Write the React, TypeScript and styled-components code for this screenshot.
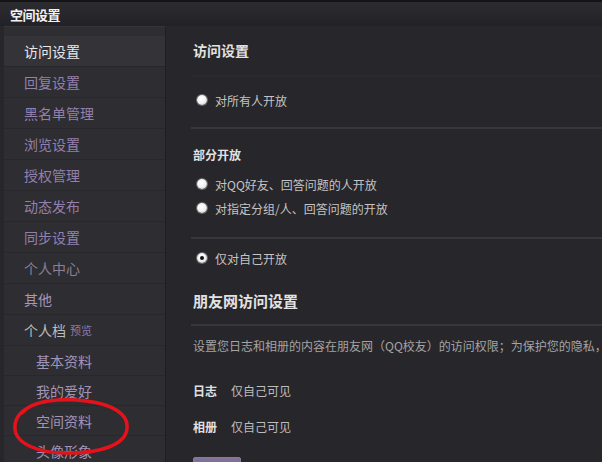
import React from "react";
import styled, { createGlobalStyle } from "styled-components";

const Global = createGlobalStyle`
  html, body { margin: 0; padding: 0; background: #27262b; }
  body { font-family: "Noto Sans CJK SC", "Noto Sans", sans-serif; }
  * { box-sizing: border-box; }
`;

const Window = styled.div`
  position: relative;
  width: 602px;
  height: 462px;
  overflow: hidden;
  display: flex;
  flex-direction: column;
  background: #27262b;
`;

const TitleBar = styled.div`
  height: 26px;
  flex: none;
  display: flex;
  align-items: center;
  padding-left: 10px;
  border-top: 2px solid #141317;
  background: linear-gradient(#2d2c31, #222126);
  color: #f2f2f2;
  font-size: 13px;
  font-weight: 700;
  letter-spacing: -0.5px;
`;

const Body = styled.div`
  flex: 1;
  display: flex;
  min-height: 0;
`;

const Sidebar = styled.nav`
  width: 162px;
  margin-left: 4px;
  flex: none;
  padding-top: 9px;
  background: #2e2d32;
  border-right: 1px solid #1f1e23;
  border-top: 1px solid #36353a;
  & > * { flex-shrink: 0; }
`;

const NavItem = styled.div<{ $active?: boolean; $sub?: boolean; $tone?: string }>`
  height: ${(p) => (p.$sub ? 30 : 31)}px;
  display: flex;
  align-items: center;
  gap: 4px;
  padding-left: ${(p) => (p.$sub ? 32 : 20)}px;
  font-size: 14px;
  color: ${(p) => (p.$active ? "#e8e8e8" : p.$tone || "#9480ac")};
  background: ${(p) => (p.$active ? "#343338" : "transparent")};
  border-bottom: 1px solid ${(p) => (p.$active ? "#27262b" : "rgba(0,0,0,0.12)")};
`;

const Preview = styled.span`
  font-size: 11px;
  color: #8f7aa8;
`;

const Main = styled.main`
  flex: 1;
  min-width: 0;
  padding: 14px 0 0 25px;
  display: flex;
  flex-direction: column;
  color: #c8c8c8;
  & > * { flex-shrink: 0; }
`;

const Heading = styled.div<{ $size?: number; $mt?: number }>`
  padding-left: 2px;
  margin-top: ${(p) => p.$mt || 0}px;
  font-size: ${(p) => p.$size || 14}px;
  font-weight: 700;
  color: #e2e2e2;
  line-height: 20px;
`;

const Rule = styled.div<{ $faint?: boolean; $mt: number; $mb: number }>`
  height: 2px;
  margin: ${(p) => p.$mt}px 0 ${(p) => p.$mb}px;
  background: ${(p) => (p.$faint ? "#2a292e" : "#38373c")};
`;

const RadioRow = styled.label<{ $mt?: number }>`
  display: flex;
  align-items: center;
  height: 24px;
  margin-top: ${(p) => p.$mt || 0}px;
  padding-left: 6px;
  gap: 8px;
  font-size: 12px;
  color: #c4c4c4;
`;

const Radio = styled.span<{ $checked?: boolean }>`
  width: 10px;
  height: 10px;
  border-radius: 50%;
  background: radial-gradient(circle at 40% 35%, #ffffff 0%, #f2f2f2 50%, #b8b8b8 100%);
  box-shadow: 0 0 0 1px #6a6a6e;
  display: flex;
  align-items: center;
  justify-content: center;
  &::after {
    content: "";
    width: 4px;
    height: 4px;
    border-radius: 50%;
    background: ${(p) => (p.$checked ? "#111" : "transparent")};
  }
`;

const Desc = styled.div`
  padding-left: 2px;
  font-size: 12px;
  color: #a4a4a4;
  white-space: nowrap;
  overflow: hidden;
  line-height: 20px;
`;

const InfoRow = styled.div<{ $mt: number }>`
  display: flex;
  align-items: center;
  margin-top: ${(p) => p.$mt}px;
  padding-left: 2px;
  font-size: 12px;
  line-height: 20px;
`;

const InfoLabel = styled.span`
  width: 38px;
  font-weight: 700;
  color: #e0e0e0;
`;

const InfoValue = styled.span`
  color: #bdbdbd;
`;

const SaveButton = styled.button`
  margin-top: 20px;
  margin-left: 2px;
  width: 48px;
  height: 24px;
  border: 1px solid #8b7a9e;
  border-radius: 2px;
  background: linear-gradient(#83729a, #6d5d82);
  color: #f0f0f0;
  font-family: inherit;
  font-size: 12px;
  padding: 0;
  align-self: flex-start;
`;

const Annotation = styled.svg`
  position: absolute;
  left: 0;
  top: 0;
  pointer-events: none;
`;

const navItems: { label: string; tone?: string; active?: boolean }[] = [
  { label: "访问设置", active: true },
  { label: "回复设置" },
  { label: "黑名单管理" },
  { label: "浏览设置" },
  { label: "授权管理" },
  { label: "动态发布" },
  { label: "同步设置" },
  { label: "个人中心", tone: "#8a7e99" },
  { label: "其他", tone: "#a797bb" },
];

const subItems = ["基本资料", "我的爱好", "空间资料", "头像形象"];

export default function App() {
  return (
    <>
      <Global />
      <Window>
        <TitleBar>空间设置</TitleBar>
        <Body>
          <Sidebar>
            {navItems.map((it) => (
              <NavItem key={it.label} $active={it.active} $tone={it.tone}>
                {it.label}
              </NavItem>
            ))}
            <NavItem $tone="#bcbcbc">
              个人档 <Preview>预览</Preview>
            </NavItem>
            {subItems.map((s) => (
              <NavItem key={s} $sub $tone="#a394b6">
                {s}
              </NavItem>
            ))}
          </Sidebar>
          <Main>
            <Heading>访问设置</Heading>
            <Rule $faint $mt={15} $mb={11} />
            <RadioRow>
              <Radio />
              对所有人开放
            </RadioRow>
            <Rule $mt={15} $mb={16} />
            <Heading $size={12}>部分开放</Heading>
            <RadioRow $mt={7}>
              <Radio />
              对QQ好友、回答问题的人开放
            </RadioRow>
            <RadioRow>
              <Radio />
              对指定分组/人、回答问题的开放
            </RadioRow>
            <Rule $mt={17} $mb={7} />
            <RadioRow>
              <Radio $checked />
              仅对自己开放
            </RadioRow>
            <Heading $size={15} $mt={21}>
              朋友网访问设置
            </Heading>
            <Rule $mt={13} $mb={10} />
            <Desc>设置您日志和相册的内容在朋友网（QQ校友）的访问权限；为保护您的隐私，</Desc>
            <InfoRow $mt={25}>
              <InfoLabel>日志</InfoLabel>
              <InfoValue>仅自己可见</InfoValue>
            </InfoRow>
            <InfoRow $mt={16}>
              <InfoLabel>相册</InfoLabel>
              <InfoValue>仅自己可见</InfoValue>
            </InfoRow>
            <SaveButton>保存</SaveButton>
          </Main>
        </Body>
        <Annotation width="602" height="462" viewBox="0 0 602 462">
          <path
            d="M 22 413 C 32 400, 62 398, 86 401 C 112 404, 129 414, 127 429 C 125 445, 100 453, 70 453 C 40 454, 16 444, 15 429 C 14 419, 20 411, 33 405"
            fill="none"
            stroke="#e4121b"
            strokeWidth="3.5"
            strokeLinecap="round"
          />
        </Annotation>
      </Window>
    </>
  );
}
